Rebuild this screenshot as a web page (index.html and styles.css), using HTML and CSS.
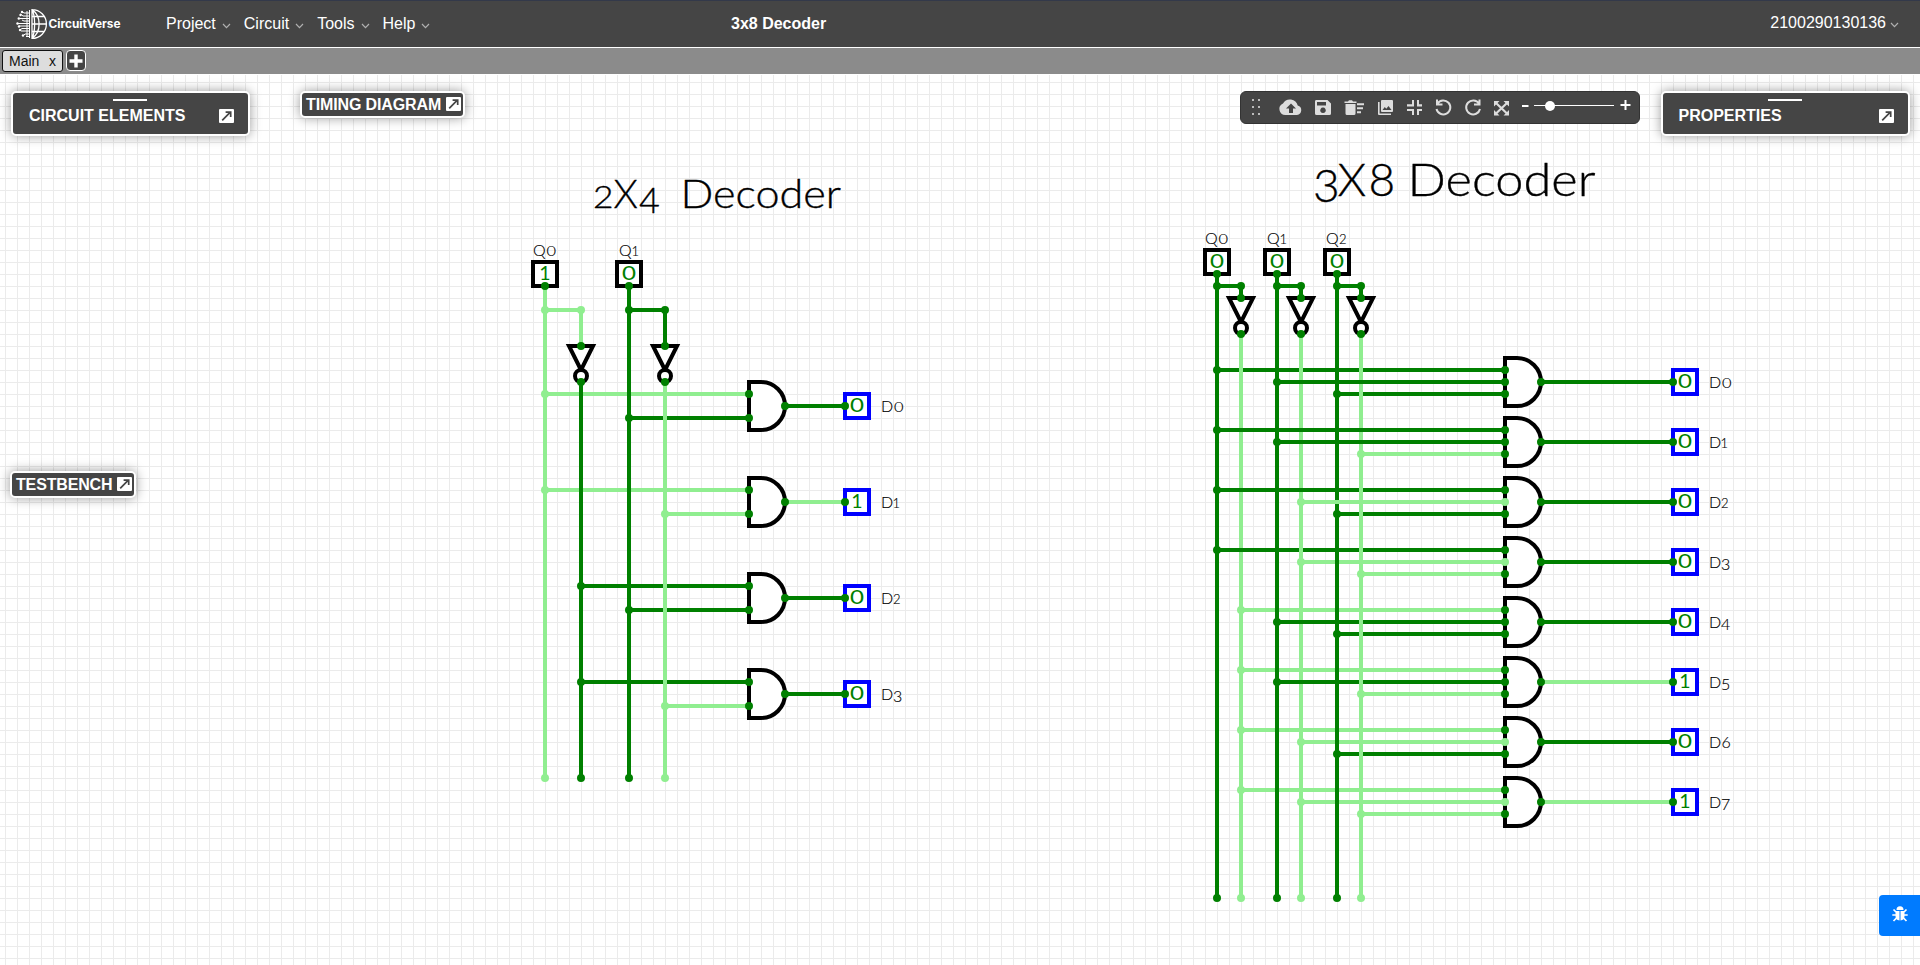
FILE: index.html
```html
<!DOCTYPE html>
<html lang="en">
<head>
<meta charset="utf-8">
<title>3x8 Decoder - CircuitVerse</title>
<link rel="stylesheet" href="styles.css">
</head>
<body>
<svg class="defs" width="0" height="0" aria-hidden="true">
  <symbol id="chevron" viewBox="0 0 9 6"><path d="M1 1l3.5 3.6L8 1" fill="none" stroke="#b0b0b0" stroke-width="1.2"/></symbol>
  <symbol id="popout" viewBox="0 0 15 14"><rect width="15" height="14" rx="1" fill="#fff"/><path d="M3.2 11.3L10.6 3.9M6.6 3.1H11.7V8" fill="none" stroke="#454545" stroke-width="1.7"/></symbol>
  <symbol id="and" viewBox="-4 -28 48 56" overflow="visible"><path d="M0-24H12A24 24 0 0 1 12 24H0Z" fill="#fff" stroke="#000" stroke-width="4"/></symbol>
</svg>

<header class="navbar">
  <a class="logo">
    <svg width="110" height="32" viewBox="0 0 110 32">
      <g fill="none" stroke="#fff" stroke-width="1.3">
        <path d="M16 1.6A14.4 14.4 0 0 1 16 30.4M16 1V31M16 1.6C25.500 8 25.500 24 16 30.400M16 1.600C19.500 8 19.500 24 16 30.400M16 16H30.400M16 8.500H28M16 23.500H28"/>
        <path d="M13.500 2V30M11 3V29" stroke-width="1"/>
        <path d="M14 5H8L6 3.500M14 8H7L4.500 6M14 10.500H4M14 13H8L6 12M14 15.500H1M14 18H3M14 20.500H6L4 22M14 23H5M14 26H9L7 28M14 28.500H10" stroke-width="1"/>
      </g>
      <g fill="#fff"><circle cx="6" cy="4" r="1.200"/><circle cx="4.500" cy="7" r="1.200"/><circle cx="2.800" cy="10.500" r="1.200"/><circle cx="1.500" cy="15.500" r="1.200"/><circle cx="3" cy="18.500" r="1.200"/><circle cx="4" cy="22" r="1.200"/><circle cx="7" cy="27.500" r="1.200"/></g>
      <text class="brand" x="32.500" y="19.700" textLength="72" lengthAdjust="spacingAndGlyphs">CircuitVerse</text>
    </svg>
  </a>
  <nav class="menu">
    <span class="menu-item">Project<svg class="chev"><use href="#chevron"/></svg></span>
    <span class="menu-item">Circuit<svg class="chev"><use href="#chevron"/></svg></span>
    <span class="menu-item">Tools<svg class="chev"><use href="#chevron"/></svg></span>
    <span class="menu-item">Help<svg class="chev"><use href="#chevron"/></svg></span>
  </nav>
  <div class="title">3x8 Decoder</div>
  <div class="user">2100290130136<svg class="chev"><use href="#chevron"/></svg></div>
</header>

<div class="tabs">
  <div class="tab"><span>Main</span><span>x</span></div>
  <div class="tab-add"><svg width="14" height="14" viewBox="0 0 14 14"><path d="M7 .5V13.500M.5 7H13.500" stroke="#fff" stroke-width="3.400"/></svg></div>
</div>

<main class="workspace">
  <svg class="circuit" width="1920" height="890" viewBox="0 75 1920 890">
    <defs>
      <pattern id="grid" x="5" y="10" width="12" height="12" patternUnits="userSpaceOnUse"><path d="M0 0H12V1H1V12H0Z" fill="#ebebeb"/></pattern>
    </defs>
    <rect x="0" y="75" width="1920" height="890" fill="url(#grid)"/>

    <!-- gates -->
    <g>
      <g id="notgates" fill="#fff" stroke="#000" stroke-width="4">
        <path d="M569 346H593L581 370ZM653 346H677L665 370ZM1229 298H1253L1241 322ZM1289 298H1313L1301 322ZM1349 298H1373L1361 322Z"/>
        <circle cx="581" cy="376" r="6"/><circle cx="665" cy="376" r="6"/>
        <circle cx="1241" cy="328" r="6"/><circle cx="1301" cy="328" r="6"/><circle cx="1361" cy="328" r="6"/>
      </g>
      <use href="#and" x="745" y="378" width="48" height="56"/><use href="#and" x="745" y="474" width="48" height="56"/><use href="#and" x="745" y="570" width="48" height="56"/><use href="#and" x="745" y="666" width="48" height="56"/>
      <use href="#and" x="1501" y="354" width="48" height="56"/><use href="#and" x="1501" y="414" width="48" height="56"/><use href="#and" x="1501" y="474" width="48" height="56"/><use href="#and" x="1501" y="534" width="48" height="56"/><use href="#and" x="1501" y="594" width="48" height="56"/><use href="#and" x="1501" y="654" width="48" height="56"/><use href="#and" x="1501" y="714" width="48" height="56"/><use href="#and" x="1501" y="774" width="48" height="56"/>
    </g>

    <!-- input and output boxes -->
    <path class="box-in" d="M533 262h24v24h-24ZM617 262h24v24h-24ZM1205 250h24v24h-24ZM1265 250h24v24h-24ZM1325 250h24v24h-24Z"/>
    <path class="box-out" d="M845 394h24v24h-24ZM845 490h24v24h-24ZM845 586h24v24h-24ZM845 682h24v24h-24ZM1673 370h24v24h-24ZM1673 430h24v24h-24ZM1673 490h24v24h-24ZM1673 550h24v24h-24ZM1673 610h24v24h-24ZM1673 670h24v24h-24ZM1673 730h24v24h-24ZM1673 790h24v24h-24Z"/>

    <!-- wires -->
    <path class="wire high" d="M545 310H581V346M545 394H749M545 490H749M665 514H749M665 706H749M785 502H845
      M1361 454H1505M1301 502H1505M1301 562H1505M1361 574H1505M1241 610H1505M1241 670H1505M1361 694H1505M1241 730H1505M1301 742H1505M1241 790H1505M1301 802H1505M1361 814H1505M1541 682H1673M1541 802H1673"/>
    <path class="wire low" d="M629 310H665V346M629 418H749M581 586H749M629 610H749M581 682H749M785 406H845M785 598H845M785 694H845
      M1217 286H1241V298M1277 286H1301V298M1337 286H1361V298
      M1217 370H1505M1277 382H1505M1337 394H1505M1217 430H1505M1277 442H1505M1217 490H1505M1337 514H1505M1217 550H1505M1277 622H1505M1337 634H1505M1277 682H1505M1337 754H1505
      M1541 382H1673M1541 442H1673M1541 502H1673M1541 562H1673M1541 622H1673M1541 742H1673"/>
    <path class="wire low" d="M581 382V778M629 286V778M1217 274V898M1277 274V898M1337 274V898"/>
    <path class="wire high" d="M545 286V778M665 382V778M1241 334V898M1301 334V898M1361 334V898"/>
    <path class="wire high" d="M1332 502H1342"/>
    <path class="wire low" d="M1236 430H1246M1296 430H1306M1356 430H1366M1296 442H1306M1356 442H1366M1236 490H1246M1296 490H1306M1236 550H1246M1296 382H1306M1356 382H1366M1296 622H1306M1296 682H1306"/>

    <!-- joints: zero-length strokes with round caps -->
    <path class="node high" d="M545 310h0M581 310h0M545 394h0M545 490h0M665 514h0M665 706h0M545 778h0M665 778h0
      M1361 454h0M1301 502h0M1301 562h0M1361 574h0M1241 610h0M1241 670h0M1361 694h0M1241 730h0M1301 742h0M1241 790h0M1301 802h0M1361 814h0M1241 898h0M1301 898h0M1361 898h0
      M1505 502h0M1505 562h0M1505 742h0M1505 802h0"/>
    <path class="node low" d="M545 286h0M629 286h0M629 310h0M665 310h0M581 346h0M665 346h0M581 382h0M665 382h0M629 418h0M581 586h0M629 610h0M581 682h0M581 778h0M629 778h0
      M749 394h0M749 418h0M749 490h0M749 514h0M749 586h0M749 610h0M749 682h0M749 706h0M785 406h0M785 502h0M785 598h0M785 694h0M845 406h0M845 502h0M845 598h0M845 694h0
      M1217 274h0M1277 274h0M1337 274h0M1217 286h0M1241 286h0M1277 286h0M1301 286h0M1337 286h0M1361 286h0M1241 298h0M1301 298h0M1361 298h0M1241 334h0M1301 334h0M1361 334h0
      M1217 370h0M1277 382h0M1337 394h0M1217 430h0M1277 442h0M1217 490h0M1337 514h0M1217 550h0M1277 622h0M1337 634h0M1277 682h0M1337 754h0M1217 898h0M1277 898h0M1337 898h0
      M1505 370h0M1505 382h0M1505 394h0M1505 430h0M1505 442h0M1505 454h0M1505 490h0M1505 514h0M1505 550h0M1505 574h0M1505 610h0M1505 622h0M1505 634h0M1505 670h0M1505 682h0M1505 694h0M1505 730h0M1505 754h0M1505 790h0M1505 814h0
      M1541 382h0M1541 442h0M1541 502h0M1541 562h0M1541 622h0M1541 682h0M1541 742h0M1541 802h0M1673 382h0M1673 442h0M1673 502h0M1673 562h0M1673 622h0M1673 682h0M1673 742h0M1673 802h0"/>

    <!-- signal values -->
    <g class="value">
      <text x="545" y="280">1</text><text x="629" y="280" textLength="14" lengthAdjust="spacingAndGlyphs">0</text>
      <text x="1217" y="268" textLength="14" lengthAdjust="spacingAndGlyphs">0</text><text x="1277" y="268" textLength="14" lengthAdjust="spacingAndGlyphs">0</text><text x="1337" y="268" textLength="14" lengthAdjust="spacingAndGlyphs">0</text>
      <text x="857" y="412" textLength="14" lengthAdjust="spacingAndGlyphs">0</text><text x="857" y="508">1</text><text x="857" y="604" textLength="14" lengthAdjust="spacingAndGlyphs">0</text><text x="857" y="700" textLength="14" lengthAdjust="spacingAndGlyphs">0</text>
      <text x="1685" y="388" textLength="14" lengthAdjust="spacingAndGlyphs">0</text><text x="1685" y="448" textLength="14" lengthAdjust="spacingAndGlyphs">0</text><text x="1685" y="508" textLength="14" lengthAdjust="spacingAndGlyphs">0</text><text x="1685" y="568" textLength="14" lengthAdjust="spacingAndGlyphs">0</text><text x="1685" y="628" textLength="14" lengthAdjust="spacingAndGlyphs">0</text><text x="1685" y="688">1</text><text x="1685" y="748" textLength="14" lengthAdjust="spacingAndGlyphs">0</text><text x="1685" y="808">1</text>
    </g>

    <!-- labels with old-style numerals -->
    <g class="label">
      <text x="533" y="255.500">Q</text><text class="sm" x="546.500" y="255.500" textLength="9.500" lengthAdjust="spacingAndGlyphs">0</text>
      <text x="619" y="255.500">Q<tspan class="sm" x="631.500">1</tspan></text>
      <text x="1205" y="243.500">Q</text><text class="sm" x="1218.500" y="243.500" textLength="9.500" lengthAdjust="spacingAndGlyphs">0</text>
      <text x="1267" y="243.500">Q<tspan class="sm" x="1279.500">1</tspan></text>
      <text x="1326" y="243.500">Q<tspan class="sm" x="1339">2</tspan></text>
      <text x="881" y="411.500">D</text><text class="sm" x="894" y="411.500" textLength="9.500" lengthAdjust="spacingAndGlyphs">0</text>
      <text x="881" y="507.500">D<tspan class="sm" x="892.500">1</tspan></text>
      <text x="881" y="603.500">D<tspan class="sm" x="893">2</tspan></text>
      <text x="881" y="699.500">D<tspan x="893" dy="2.500">3</tspan></text>
      <text x="1709" y="387.500">D</text><text class="sm" x="1722" y="387.500" textLength="9.500" lengthAdjust="spacingAndGlyphs">0</text>
      <text x="1709" y="447.500">D<tspan class="sm" x="1720.500">1</tspan></text>
      <text x="1709" y="507.500">D<tspan class="sm" x="1721">2</tspan></text>
      <text x="1709" y="567.500">D<tspan x="1721" dy="2.500">3</tspan></text>
      <text x="1709" y="627.500">D<tspan x="1721" dy="2.500">4</tspan></text>
      <text x="1709" y="687.500">D<tspan x="1721" dy="2.500">5</tspan></text>
      <text x="1709" y="747.500">D<tspan x="1721.500">6</tspan></text>
      <text x="1709" y="807.500">D<tspan x="1721" dy="2.500">7</tspan></text>
    </g>
    <g class="heading">
      <g class="heading-small">
        <text class="sm" x="593" y="208" textLength="20.500" lengthAdjust="spacingAndGlyphs">2</text>
        <text x="613.500" y="208">X<tspan class="md" x="639" dy="5">4</tspan></text>
        <text x="680.500" y="208" textLength="160.500" lengthAdjust="spacingAndGlyphs">Decoder</text>
      </g>
      <g class="heading-large">
        <text x="1313" y="196"><tspan dy="6">3</tspan><tspan x="1337.500" dy="-6">X</tspan><tspan x="1368.500">8</tspan></text>
        <text x="1407.500" y="196" textLength="188" lengthAdjust="spacingAndGlyphs">Decoder</text>
      </g>
    </g>
  </svg>

  <section class="panel panel-elements"><i class="grip"></i><span>CIRCUIT ELEMENTS</span><svg class="pop"><use href="#popout"/></svg></section>
  <section class="panel panel-properties"><i class="grip"></i><span>PROPERTIES</span><svg class="pop"><use href="#popout"/></svg></section>
  <section class="mini mini-timing"><span>TIMING DIAGRAM</span><svg class="pop"><use href="#popout"/></svg></section>
  <section class="mini mini-testbench"><span>TESTBENCH</span><svg class="pop"><use href="#popout"/></svg></section>

  <div class="toolbar">
    <svg width="398" height="31" viewBox="1241 92 398 31">
      <g fill="#bbb"><path d="M1252 99h2v2h-2zM1258 99h2v2h-2zM1252 106h2v2h-2zM1258 106h2v2h-2zM1252 113h2v2h-2zM1258 113h2v2h-2z"/></g>
      <g fill="#ddd">
        <path fill-rule="evenodd" d="M1297.700 105.600A8 8 0 0 0 1283 103.500 6 6 0 0 0 1285.500 115H1297A4.800 4.800 0 0 0 1297.700 105.600ZM1293 108.500V113H1289V108.500H1286L1291 103.500L1296 108.500Z"/>
        <path fill-rule="evenodd" d="M1316 100H1327.500L1331 103.500V113.500A1.500 1.500 0 0 1 1329.500 115H1316.500A1.500 1.500 0 0 1 1315 113.500V101.500Q1315 100 1316 100ZM1317 102V105.500H1326V102ZM1323 107.500a2.800 2.800 0 1 0 .01 0Z"/>
        <path d="M1344.500 101.500H1348L1349 100.300H1352L1353 101.500H1356.500V103H1344.500ZM1345.500 104H1355.500V113.500Q1355.500 115 1354 115H1347Q1345.500 115 1345.500 113.500ZM1357 103.300H1364V105.200H1357ZM1357 107.300H1363V109.200H1357ZM1357 111.300H1361V113.200H1357Z"/>
        <path fill-rule="evenodd" d="M1383 100H1392Q1393 100 1393 101V111Q1393 112 1392 112H1382Q1381 112 1381 111V101Q1381 100 1382 100ZM1382.500 110H1391.500L1388.500 106L1386.300 108.800L1384.800 107ZM1378 102H1379.600V113.400H1391V115H1379Q1378 115 1378 114Z"/>
        <path d="M1412 100H1414V106.500H1407V104.300H1412ZM1417 100H1419V104.300H1422V106.500H1417ZM1407 109H1414V115H1412V111H1407ZM1417 109H1422V111H1419V115H1417Z"/>
      </g>
      <g fill="none" stroke="#ddd" stroke-width="2">
        <path d="M1437.500 103.500A7 7 0 1 1 1436.500 109M1437 99.500V104.500H1442.500M1479 103.500A7 7 0 1 0 1480 109M1479.500 99.500V104.500H1474"/>
        <path stroke-width="2.200" d="M1495.500 102.500L1507.500 114M1507.500 102.500L1495.500 114"/>
      </g>
      <path fill="#ddd" d="M1494 101h5.500l-5.500 5.500ZM1509 101v5.500l-5.500-5.500ZM1494 115.500v-5.500l5.500 5.500ZM1509 115.500h-5.500l5.500-5.500Z"/>
      <path fill="#fff" d="M1522 105h6.500v2h-6.500ZM1534 105h80v1h-80ZM1620.500 104h10v2h-10ZM1624.500 100h2v10h-2Z"/>
      <circle cx="1550" cy="106" r="5" fill="#fff"/>
    </svg>
  </div>

  <div class="bug">
    <svg width="16" height="16" viewBox="0 0 16 16"><path fill="#fff" d="M4.500 4A3.500 3.700 0 0 1 11.500 4ZM3.500 5H7.500V14.500Q3.500 14 3.500 10ZM8.500 5H12.500V10Q12.500 14 8.500 14.500Z"/><path d="M4 6L1.500 3.500M12 6L14.500 3.500M.3 9H4M12 9H15.700M4.500 12L1.500 15M11.500 12L14.500 15" stroke="#fff" stroke-width="1.700"/></svg>
  </div>
</main>
</body>
</html>
```

FILE: styles.css
```css
* { box-sizing: border-box; }
body {
  margin: 0;
  width: 1920px;
  height: 965px;
  overflow: hidden;
  display: flex;
  flex-direction: column;
  background: #fff;
  font: 16px "Liberation Sans", Arial, sans-serif;
}
svg { display: block; flex: none; }
.defs { position: absolute; }

.navbar {
  flex: none;
  height: 48px;
  display: grid;
  grid-template-columns: 166px 565px 400px 1fr;
  align-items: start;
  background: #454545;
  border-top: 1px solid #33394a;
  border-bottom: 1px solid #fff;
  color: #fff;
  line-height: 18px;
}
.logo { padding: 7px 0 0 16px; }
.brand { font: bold 11.500px Inter, sans-serif; fill: #fff; }
.menu { display: flex; gap: 13px; padding-top: 14px; }
.menu-item { display: flex; gap: 6px; align-items: center; }
.chev { width: 9px; height: 6px; margin-top: 3px; }
.title { padding-top: 14px; font-weight: bold; }
.user { display: flex; gap: 4px; align-items: center; justify-content: flex-end; padding: 13px 21px 0 0; }

.tabs {
  flex: none;
  height: 26px;
  display: flex;
  gap: 3px;
  padding: 2px;
  margin-bottom: 1px;
  background: #8b8b8b;
}
.tab {
  width: 61px;
  height: 22px;
  display: flex;
  justify-content: space-between;
  padding: 0 6px;
  border: 1px solid #111;
  border-radius: 3px;
  background: #ddd;
  color: #111;
  font-size: 14px;
  line-height: 20px;
}
.tab-add {
  width: 20px;
  height: 21px;
  display: flex;
  align-items: center;
  justify-content: center;
  border: 1px solid #fff;
  border-radius: 4px;
  background: #454545;
}

.workspace { position: relative; flex: 1; }
.box-in, .box-out { fill: #fff; stroke-width: 4; stroke: #000; }
.box-out { stroke: #00f; }
.wire { fill: none; stroke-width: 4; stroke-linejoin: round; }
.node { fill: none; stroke-width: 8; stroke-linecap: round; }
.high { stroke: #90ee90; }
.low { stroke: #008000; }
.value { font: 19.500px Lato, sans-serif; fill: #008000; text-anchor: middle; }
.label { font: 300 16px Lato, sans-serif; fill: #000; stroke: #000; stroke-width: .15; }
.label .sm { font-size: 13px; }
.heading { font: 300 39px Lato, sans-serif; fill: #000; stroke: #000; stroke-width: .35; }
.heading-small .sm { font-size: 31px; }
.heading-small .md { font-size: 36px; }
.heading-large { font-size: 46px; }

.panel, .mini {
  position: absolute;
  display: flex;
  background: #454545;
  border: 2px solid #fff;
  border-radius: 5px;
  box-shadow: 0 0 12px rgba(0, 0, 0, .4);
  color: #fff;
  font-weight: bold;
  line-height: 18px;
}
.panel {
  top: 16px;
  height: 45px;
  padding: 14px 14px 0 16px;
  justify-content: space-between;
}
.pop { width: 15px; height: 14px; }
.panel .pop { margin-top: 2px; }
.grip {
  position: absolute;
  top: 6px;
  width: 34px;
  height: 2px;
  background: #fff;
}
.panel-elements { left: 10.500px; width: 239px; padding-left: 16.500px; }
.panel-properties { left: 1660.500px; width: 249px; }
.panel-elements .grip { left: 100.500px; }
.panel-properties .grip { left: 105.500px; }
.mini { height: 27px; padding: 3px 2px 0 4px; justify-content: space-between; }
.mini .pop { margin-top: 1px; }
.mini-timing { left: 300px; top: 16px; width: 164.500px; letter-spacing: -.12px; }
.mini-testbench { left: 10px; top: 396px; width: 126px; letter-spacing: -.15px; }

.toolbar {
  position: absolute;
  left: 1240px;
  top: 16px;
  width: 400px;
  height: 33px;
  background: #454545;
  border: 1px solid #333;
  border-radius: 6px;
}
.bug {
  position: absolute;
  left: 1879px;
  top: 820px;
  width: 41px;
  height: 41px;
  padding: 11px 13px;
  background: #007bff;
  border-radius: 4px 0 0 4px;
}
```
